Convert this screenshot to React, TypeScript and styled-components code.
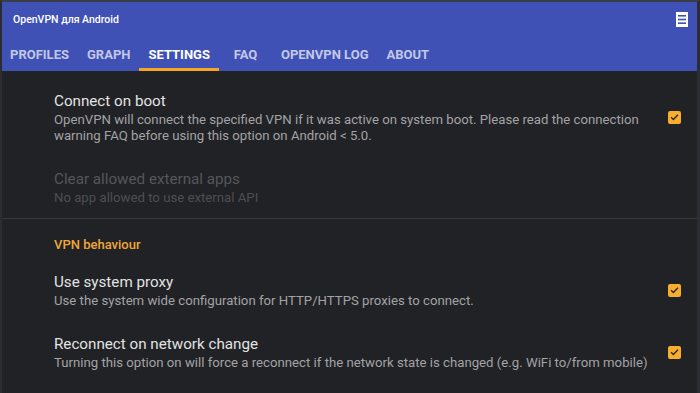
import React, { FC } from 'react'
import styled, { createGlobalStyle } from 'styled-components'

const GlobalStyle = createGlobalStyle`
  html, body {
    margin: 0;
    padding: 0;
    background: #212226;
    font-family: Roboto, "Noto Sans", sans-serif;
  }
`

type Pref = {
  title: string
  summary: string
  checked?: boolean
  disabled?: boolean
}

const tabs = ['PROFILES', 'GRAPH', 'SETTINGS', 'FAQ', 'OPENVPN LOG', 'ABOUT']

const MenuIcon: FC = () => (
  <svg width="12" height="15" viewBox="0 0 12 15">
    <rect x="0" y="0" width="12" height="15" fill="#ffffff" />
    <rect x="2" y="3" width="8" height="1.6" fill="#3f51b5" />
    <rect x="2" y="6.7" width="8" height="1.6" fill="#3f51b5" />
    <rect x="2" y="10.4" width="8" height="1.6" fill="#3f51b5" />
  </svg>
)

const Check: FC<{ checked?: boolean }> = ({ checked }) =>
  checked ? (
    <CheckBox>
      <svg width="14" height="14" viewBox="0 0 14 14">
        <path d="M3.3 7.2 L5.8 9.6 L10.7 4.5" fill="none" stroke="#2a2a2a" strokeWidth="1.5" />
      </svg>
    </CheckBox>
  ) : null

const PrefRow: FC<{ pref: Pref }> = ({ pref }) => (
  <Row>
    <RowText>
      <Title disabled={pref.disabled}>{pref.title}</Title>
      <Summary disabled={pref.disabled}>{pref.summary}</Summary>
    </RowText>
    <Check checked={pref.checked} />
  </Row>
)

const App: FC = () => {
  return (
    <>
      <GlobalStyle />
      <Frame>
        <AppBar>
          <TopRow>
            <AppTitle>OpenVPN для Android</AppTitle>
            <MenuIcon />
          </TopRow>
          <TabRow>
            {tabs.map(t => (
              <Tab key={t} active={t === 'SETTINGS'}>{t}</Tab>
            ))}
          </TabRow>
        </AppBar>
        <Content>
          <Section first>
            <PrefRow
              pref={{
                title: 'Connect on boot',
                summary:
                  'OpenVPN will connect the specified VPN if it was active on system boot. Please read the connection warning FAQ before using this option on Android < 5.0.',
                checked: true,
              }}
            />
            <PrefRow
              pref={{
                title: 'Clear allowed external apps',
                summary: 'No app allowed to use external API',
                disabled: true,
              }}
            />
          </Section>
          <Divider />
          <Section>
            <Category>VPN behaviour</Category>
            <PrefRow
              pref={{
                title: 'Use system proxy',
                summary: 'Use the system wide configuration for HTTP/HTTPS proxies to connect.',
                checked: true,
              }}
            />
            <PrefRow
              pref={{
                title: 'Reconnect on network change',
                summary:
                  'Turning this option on will force a reconnect if the network state is changed (e.g. WiFi to/from mobile)',
                checked: true,
              }}
            />
          </Section>
        </Content>
      </Frame>
    </>
  )
}

const Frame = styled.div`
  height: 393px;
  box-sizing: border-box;
  border-top: 2px solid #3a3c46;
  border-left: 2px solid #2c2d33;
  border-right: 3px solid #2c2d33;
  background: #212226;
  overflow: hidden;
  display: flex;
  flex-direction: column;
`

const AppBar = styled.div`
  background: #3f51b5;
  display: flex;
  flex-direction: column;
`

const TopRow = styled.div`
  height: 34px;
  display: flex;
  align-items: center;
  justify-content: space-between;
  padding: 0 9px 0 11px;
`

const AppTitle = styled.div`
  color: #ffffff;
  font-size: 10.5px;
  font-weight: 500;
`

const TabRow = styled.div`
  display: flex;
  height: 35px;
`

const Tab = styled.div<{ active?: boolean }>`
  min-width: 53px;
  padding: 4px 9px 0;
  display: flex;
  align-items: center;
  justify-content: center;
  box-sizing: border-box;
  font-size: 13px;
  font-weight: 700;
  color: ${p => (p.active ? '#ffffff' : '#c3c8e6')};
  border-bottom: 3px solid ${p => (p.active ? '#f5a623' : 'transparent')};
  &:first-child {
    padding-left: 8px;
  }
`

const Content = styled.div`
  display: flex;
  flex-direction: column;
`

const Section = styled.div<{ first?: boolean }>`
  display: flex;
  flex-direction: column;
  padding-top: ${p => (p.first ? '7px' : '0')};
`

const Row = styled.div`
  display: flex;
  align-items: center;
  padding: 12px 16px 12px 52px;
  gap: 18px;
`

const RowText = styled.div`
  flex: 1;
  display: flex;
  flex-direction: column;
`

const Title = styled.div<{ disabled?: boolean }>`
  font-size: 15.2px;
  line-height: 22px;
  color: ${p => (p.disabled ? '#55565a' : '#e2e2e2')};
`

const Summary = styled.div<{ disabled?: boolean }>`
  font-size: 13.2px;
  line-height: 16px;
  color: ${p => (p.disabled ? '#4d4e52' : '#a3a3a5')};
`

const CheckBox = styled.div`
  width: 13px;
  height: 13px;
  border-radius: 2px;
  background: #f9ad2e;
  display: flex;
  align-items: center;
  justify-content: center;
  flex-shrink: 0;
`

const Divider = styled.div`
  height: 1px;
  background: #36373c;
`

const Category = styled.div`
  color: #eea73a;
  font-size: 13px;
  line-height: 16px;
  font-weight: 500;
  padding: 18px 0 6px 52px;
`

export default App
